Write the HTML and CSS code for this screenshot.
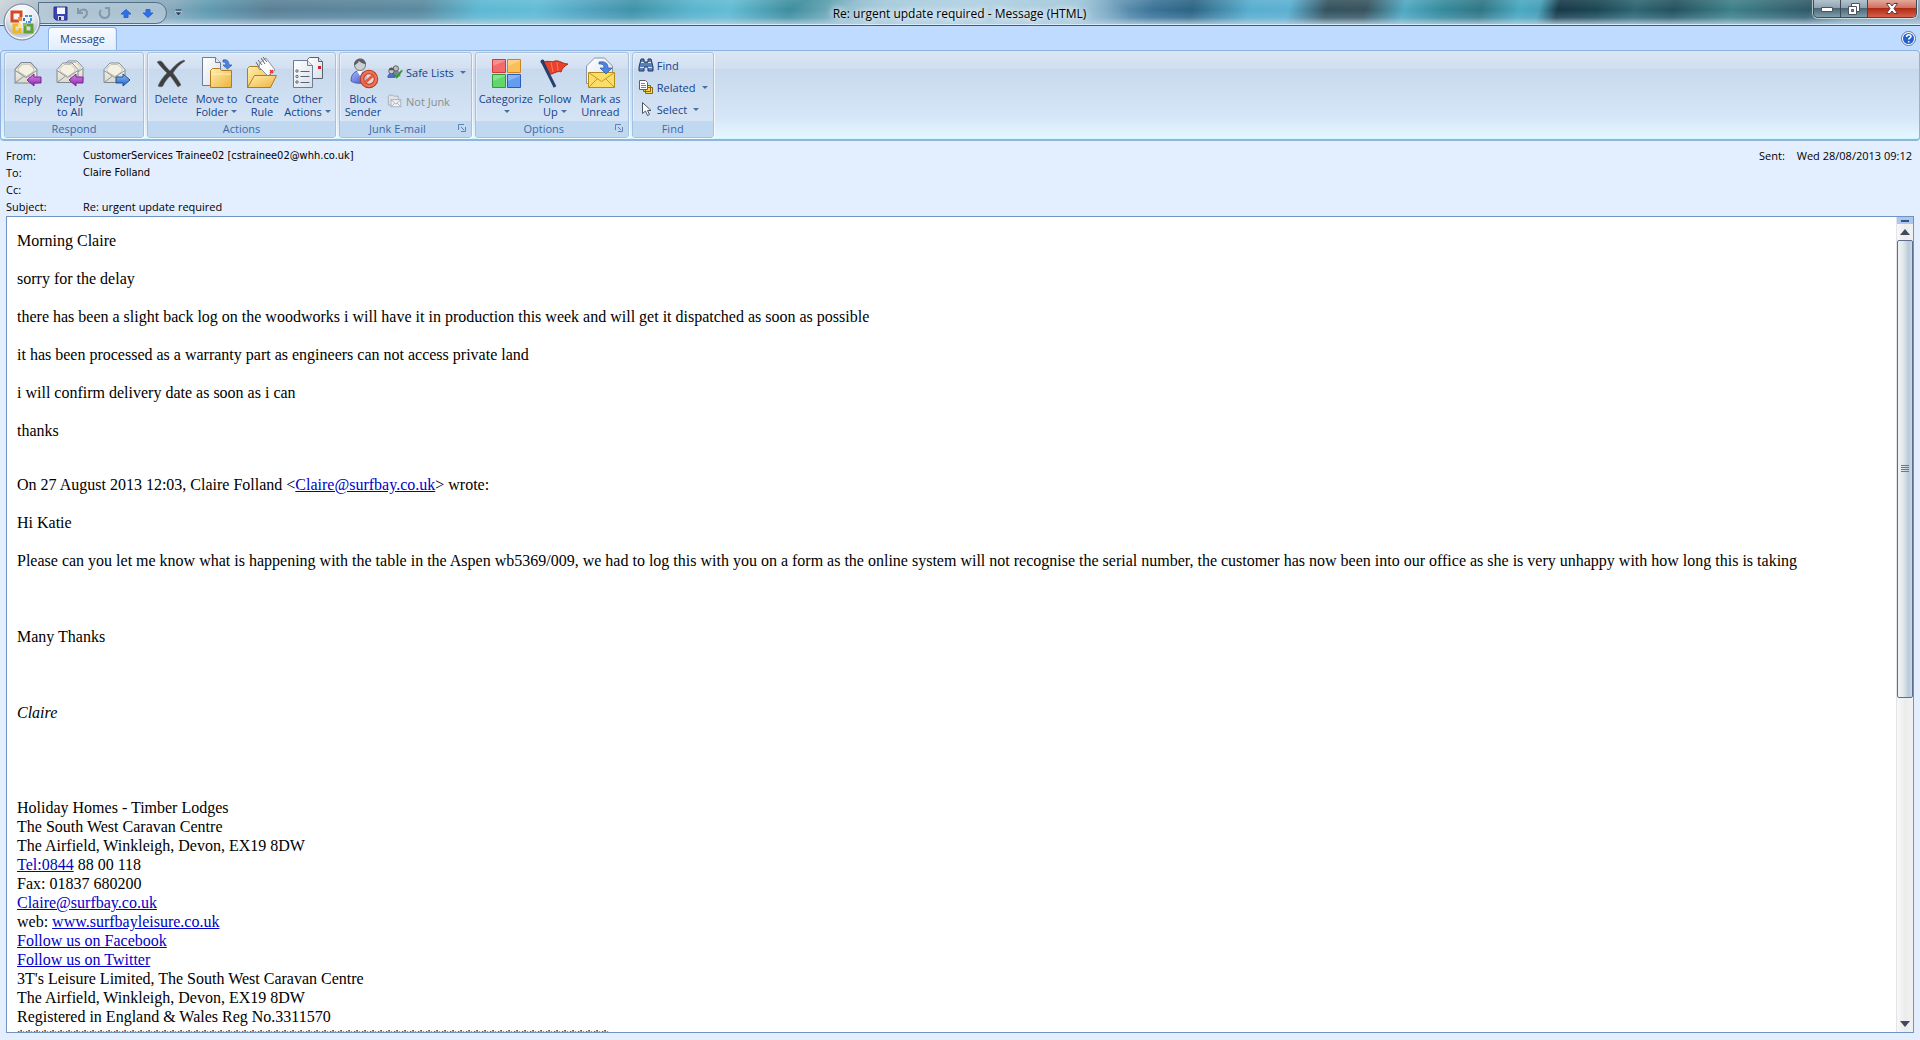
FILE: index.html
```html
<!DOCTYPE html>
<html lang="en">
<head>
<meta charset="utf-8">
<title>Re: urgent update required - Message (HTML)</title>
<link rel="stylesheet" href="styles.css">
</head>
<body>
<svg class="defs" aria-hidden="true">
  <defs>
    <linearGradient id="paper" x1="0" y1="0" x2="1" y2="1"><stop offset="0" stop-color="#fff"/><stop offset="1" stop-color="#d9dfe8"/></linearGradient>
    <linearGradient id="cream" x1="0" y1="0" x2="0" y2="1"><stop offset="0" stop-color="#fffdf2"/><stop offset="1" stop-color="#dcd9c8"/></linearGradient>
    <linearGradient id="gold" x1="0" y1="0" x2="1" y2="1"><stop offset="0" stop-color="#fff0b0"/><stop offset="1" stop-color="#eeb13c"/></linearGradient>
    <linearGradient id="purple" x1="0" y1="0" x2="0" y2="1"><stop offset="0" stop-color="#d58be6"/><stop offset="1" stop-color="#8c25ac"/></linearGradient>
    <linearGradient id="blue" x1="0" y1="0" x2="0" y2="1"><stop offset="0" stop-color="#8cc1f5"/><stop offset="1" stop-color="#1f5fc8"/></linearGradient>
    <linearGradient id="person" x1="0" y1="0" x2="1" y2="1"><stop offset="0" stop-color="#a9baf8"/><stop offset="1" stop-color="#3652cc"/></linearGradient>
    <radialGradient id="orb" cx=".5" cy=".25" r=".8"><stop offset="0" stop-color="#fff"/><stop offset=".5" stop-color="#e3e7ef"/><stop offset=".75" stop-color="#b9c3d3"/><stop offset="1" stop-color="#fff"/></radialGradient>
    <symbol id="envelope" viewBox="0 0 24 24">
      <path d="M1 9 7 2.500h9L22 9v13H1z" fill="url(#cream)" stroke="#7f8896"/>
      <path d="M4 11V8l4-4h7l4 4v3l-7 5z" fill="#f4f1e2" stroke="#c4c2b4"/>
      <path d="M1 10l10.500 7L22 10M1 22l8-6M22 22l-8-6" fill="none" stroke="#8f98a6"/>
    </symbol>
  </defs>
</svg>

<div class="window">
  <header class="titlebar">
    <div class="quick">
      <button class="qbtn" aria-label="Save"><svg width="15" height="15" viewBox="0 0 15 15"><path d="M1 1h13v13H3l-2-2z" fill="#3d44b4" stroke="#282e86"/><path d="M4 1.500h8V8H4z" fill="#f4f7ff"/><path d="M5 10h6v4H5z" fill="#d5daf0"/><path d="M6 11h2v3H6z" fill="#20246c"/></svg></button>
      <button class="qbtn" aria-label="Undo"><svg width="13" height="14" viewBox="0 0 13 14"><path d="M2 2v5h5M3 6c3-4 8-3 8 1 0 3-2 4-4 5" fill="none" stroke="#8299ad" stroke-width="2"/></svg></button>
      <button class="qbtn" aria-label="Redo"><svg width="13" height="14" viewBox="0 0 13 14"><path d="M7 2h4v4M3 4c-3 4 0 8 4 8 3 0 5-3 4-6" fill="none" stroke="#8299ad" stroke-width="2"/></svg></button>
      <button class="qbtn" aria-label="Previous item"><svg width="12" height="9" viewBox="0 0 12 9"><path d="M6 .5l5 4.500H8v3.500H4V5H1z" fill="#2a70ea" stroke="#2e66d0"/></svg></button>
      <button class="qbtn" aria-label="Next item"><svg width="12" height="9" viewBox="0 0 12 9"><path d="M6 8.500l5-4.500H8V.5H4V4H1z" fill="#2a70ea" stroke="#2e66d0"/></svg></button>
    </div>
    <button class="qmore" aria-label="Customize Quick Access Toolbar"><svg width="7" height="8" viewBox="0 0 7 8"><path d="M0 0h7v2H0zM0 3h7L3.500 7z" fill="#27415e" stroke="#e6f0f6" stroke-width=".5"/></svg></button>
    <h1 class="title">Re: urgent update required - Message (HTML)</h1>
    <div class="controls">
      <button class="ctl" aria-label="Minimize"><svg width="12" height="6" viewBox="0 0 12 6"><path d="M.5 1.500h11v4H.5z" fill="#fff" stroke="#4b5560"/></svg></button>
      <button class="ctl" aria-label="Restore"><svg width="12" height="12" viewBox="0 0 12 12"><path d="M3.500.5h8v8h-8z" fill="#fff" stroke="#4b5560"/><path d="M.5 3.500h8v8h-8z" fill="#fff" stroke="#4b5560"/><path d="M3.500 6.500h2v2h-2z" fill="#8897a4" stroke="#4b5560"/></svg></button>
      <button class="ctl close" aria-label="Close"><svg width="12" height="11" viewBox="0 0 12 11"><path d="M.5.5h3.500L6 3 8 .5h3.500L8 5.500l3.500 5H8L6 8l-2 2.500H.5l3.500-5z" fill="#fff" stroke="#5a3a40"/></svg></button>
    </div>
  </header>

  <button class="office" aria-label="Office Button"><svg width="38" height="38" viewBox="0 0 38 38">
    <circle cx="19" cy="19" r="18" fill="url(#orb)" stroke="#6f8098"/><circle cx="19" cy="19" r="16.500" fill="none" stroke="#fff" stroke-opacity=".8"/>
    <g fill="none" stroke-width="3"><path d="M16 18H9V9h9v5" stroke="#d9481c"/><path d="M22 13h6v6h-5" stroke="#4a8fd0" stroke-width="2" stroke-dasharray="3 1"/><path d="M17 22h-6v7h6v-4" stroke="#f0b71e"/><path d="M22 23v6h7v-7h-5" stroke="#62a030"/></g>
    <path d="M15 14h4v4h-4z" fill="#f58a3c"/><path d="M20 15h2v3h-2z" fill="#3a74bd"/><path d="M15 21h3v3h-3z" fill="#fce18b"/><path d="M20 20h4v3h-4z" fill="#8cc152"/>
  </svg></button>

  <nav class="tabs">
    <button class="tab">Message</button>
    <button class="help" aria-label="Help"><svg width="15" height="15" viewBox="0 0 15 15"><circle cx="7.500" cy="7.500" r="7" fill="#fff" stroke="#5577a8"/><circle cx="7.500" cy="7.500" r="5.500" fill="#2560d0"/><path d="M5.500 6c0-3 4.500-3 4.500-.5 0 1.500-2.300 1.500-2.300 3M7.700 10v1.500" fill="none" stroke="#fff" stroke-width="1.500"/></svg></button>
  </nav>

  <div class="ribbon">
    <section class="group">
      <div class="tools">
        <button class="big"><svg width="32" height="32" viewBox="0 0 32 32"><use href="#envelope" x="2" y="3" width="25" height="25"/><path d="M15 23l7-6v3h7v6h-7v3z" fill="url(#purple)" stroke="#7a2396"/></svg><span>Reply</span></button>
        <button class="big"><svg width="32" height="32" viewBox="0 0 32 32"><use href="#envelope" x="7" y="1" width="24" height="25"/><use href="#envelope" x="2" y="3" width="24" height="25"/><path d="M15 23l7-6v3h7v6h-7v3z" fill="url(#purple)" stroke="#7a2396"/></svg><span>Reply<br>to All</span></button>
        <button class="big wide"><svg width="32" height="32" viewBox="0 0 32 32"><use href="#envelope" x="3" y="3" width="24" height="25"/><path d="M30 23l-7-6v3h-7v6h7v3z" fill="url(#blue)" stroke="#1f4f9c"/></svg><span>Forward</span></button>
      </div>
      <h2>Respond</h2>
    </section>

    <section class="group">
      <div class="tools">
        <button class="big"><svg width="32" height="32" viewBox="0 0 32 32"><path d="M2 5c3-2 5-1 6 1 3 4 5 6 7 8 4-5 8-9 14-11l1 1c-5 3-9 7-12 12 3 4 6 8 8 12l-3 2c-3-4-5-8-8-11-3 3-6 7-7 10-1 1-4 1-5 0 2-5 5-9 9-13C8 12 5 9 2 5z" fill="#3f3f41" stroke="#666" stroke-width=".5"/></svg><span>Delete</span></button>
        <button class="big wide"><svg width="32" height="32" viewBox="0 0 32 32"><path d="M1.500.5h13l5 5v23h-18z" fill="url(#paper)" stroke="#6f7d92"/><path d="M14.500.5v5h5" fill="#e6ebf2" stroke="#6f7d92"/><path d="M9.500 13.500l2-2h7l2 2h10v17h-21z" fill="url(#gold)" stroke="#b07c1e"/><path d="M10 17h20" stroke="#fff0b8"/><path d="M22 3c4-1 6 1 6 5h3l-4.500 4L22 8h3c0-2-1-3-3-3z" fill="#4b86dd" stroke="#2659b0" stroke-width=".7"/></svg><span>Move to<br>Folder<i class="caret"></i></span></button>
        <button class="big"><svg width="32" height="32" viewBox="0 0 32 32"><path d="M1.500 30.500v-19l2-2h8l2 3h11v18z" fill="url(#gold)" stroke="#b07c1e"/><path d="M14 6l6-5 9 12-7 6-9-9z" fill="#fff" stroke="#8b95a5"/><path d="M12 3l4 5M15 1l4 6M10 5l3 5M17 0l4 5" stroke="#63666c"/><path d="M24 13l3 3M27 13l-3 3" stroke="#d33" stroke-width="1.500"/><path d="M1.500 30.500l7-12h22l-6 12z" fill="url(#gold)" stroke="#b07c1e"/></svg><span>Create<br>Rule</span></button>
        <button class="big wide"><svg width="32" height="32" viewBox="0 0 32 32"><path d="M15.500 2.500l2-2h9l4 4v17h-15z" fill="url(#paper)" stroke="#59616d"/><path d="M26.500.5v4h4" fill="#d8dee8" stroke="#59616d"/><path d="M26 9h3v3h-3z" fill="#c22"/><path d="M1.500 3.500h14l5 5v22h-19z" fill="url(#paper)" stroke="#6f7d92"/><path d="M15.500 3.500v5h5" fill="#e6ebf2" stroke="#6f7d92"/><g fill="none" stroke="#566577"><circle cx="5" cy="14" r="1.200"/><circle cx="5" cy="19.500" r="1.200"/><circle cx="5" cy="25" r="1.200"/><path d="M8.500 14.500h9M8.500 19.500h9M8.500 25.500h9"/></g></svg><span>Other<br>Actions<i class="caret"></i></span></button>
      </div>
      <h2>Actions</h2>
    </section>

    <section class="group">
      <div class="tools">
        <button class="big"><svg width="32" height="32" viewBox="0 0 32 32"><path d="M4 24c0-7 4-10 8-10s8 3 8 10c-4 3-12 3-16 0z" fill="url(#person)" stroke="#4a5bb0"/><path d="M10 14l3 5 3-5z" fill="#fff"/><circle cx="13" cy="8" r="5.500" fill="#cdd1d6" stroke="#777"/><path d="M7 8c0-8 11-9 12-1-3 0-6-2-7-3-1 2-3 4-5 4z" fill="#5c5f64"/><circle cx="22" cy="22" r="7" fill="#f6d4cc" fill-opacity=".7" stroke="#b93a22" stroke-width="4.500"/><circle cx="22" cy="22" r="7" fill="none" stroke="#ee7255" stroke-width="2.500"/><path d="M17 26.500L27 17.500" stroke="#e15b3e" stroke-width="3"/></svg><span>Block<br>Sender</span></button>
        <div class="stack">
          <button class="small"><svg width="16" height="16" viewBox="0 0 18 16"><path d="M6 10c0-5 9-5 9 1v2H6z" fill="#7e868e"/><circle cx="10" cy="4" r="3" fill="#b8bec4" stroke="#50565c"/><path d="M1 14c0-6 8-6 8 0z" fill="#5270da" stroke="#3a4e9c"/><circle cx="5" cy="7" r="3" fill="#c6cacf" stroke="#50565c"/><path d="M2 6c0-4 6-4 6 0z" fill="#54585e"/><path d="M8 11l3 3 6-8" fill="none" stroke="#2c9a34" stroke-width="2"/></svg>Safe Lists<i class="caret"></i></button>
          <button class="small" disabled><svg width="16" height="16" viewBox="0 0 18 16"><g fill="#dfe3ea" stroke="#a3abb7"><path d="M1.500 2.500l1-1h4l1 1h5v10h-11z"/><path d="M4.500 6.500h11v8h-11z" fill="#f0f2f6"/><path d="M4.500 6.500l5.500 5 5.500-5M4.500 14.500l4-4M15.500 14.500l-4-4" fill="none"/></g></svg>Not Junk</button>
        </div>
      </div>
      <h2 class="launchable">Junk E-mail<button class="launch" aria-label="Junk E-mail options"><svg width="8" height="8" viewBox="0 0 8 8"><path d="M.5 6V.5H6" fill="none" stroke="#5f82ae"/><path d="M3 3l3 3M7.500 3v4.500H3" fill="none" stroke="#5f82ae"/></svg></button></h2>
    </section>

    <section class="group">
      <div class="tools">
        <button class="big widest"><svg width="32" height="32" viewBox="0 0 32 32"><path d="M2.500 2.500h13v13h-13z" fill="#f4696b" stroke="#c93c3c"/><path d="M17.500 2.500h13v13h-13z" fill="#fbbf58" stroke="#c98620"/><path d="M2.500 17.500h13v13h-13z" fill="#62d66a" stroke="#2f9b3c"/><path d="M17.500 17.500h13v13h-13z" fill="#659bf0" stroke="#2a5cba"/><path d="M3 9l12-5v-1H3zM18 9l12-5v-1H18zM3 24l12-5v-1H3zM18 24l12-5v-1H18z" fill="#fff" fill-opacity=".25"/></svg><span>Categorize<br><i class="caret"></i></span></button>
        <button class="big"><svg width="32" height="32" viewBox="0 0 32 32"><path d="M5 5c4-2 8 1 11-1 4-1 8 3 13 3-3 2-6 4-7 8-4-2-8 3-12 2z" fill="#e8432a" stroke="#a52a18"/><path d="M12 5l2 10M18 5l1 9" stroke="#ff9078" stroke-opacity=".7"/><path d="M3 4l13 26" stroke="#26406e" stroke-width="3"/><circle cx="3.500" cy="4.500" r="2" fill="#26406e"/></svg><span>Follow<br>Up<i class="caret"></i></span></button>
        <button class="big wide"><svg width="32" height="32" viewBox="0 0 32 32"><path d="M2.500 26.500V9l8-8h10l8 8v17.500z" fill="url(#paper)" stroke="#8b95a5"/><path d="M4.500 15.500h26v15h-26z" fill="#fbdd68" stroke="#b58b20"/><path d="M4.500 15.500l13 9 13-9M4.500 30.500l9-9M30.500 30.500l-9-9" fill="none" stroke="#c4972a"/><path d="M15 5c6-1 9 1 9 6h4l-6 6-6-6h4c0-3-1-4-5-4z" fill="#4b86dd" stroke="#2659b0" stroke-width=".7"/></svg><span>Mark as<br>Unread</span></button>
      </div>
      <h2 class="launchable">Options<button class="launch" aria-label="Tracking options"><svg width="8" height="8" viewBox="0 0 8 8"><path d="M.5 6V.5H6" fill="none" stroke="#5f82ae"/><path d="M3 3l3 3M7.500 3v4.500H3" fill="none" stroke="#5f82ae"/></svg></button></h2>
    </section>

    <section class="group">
      <div class="tools">
        <div class="stack tight">
          <button class="small"><svg width="16" height="16" viewBox="0 0 16 16"><path d="M3 2h3v3h4V2h3l2 8v4h-5v-4H6v4H1v-4z" fill="#5b7fb4" stroke="#1f3b68"/><path d="M2 10.500h4M10 10.500h4M3 5.500h3M10 5.500h3" stroke="#dbe7f7"/></svg>Find</button>
          <button class="small"><svg width="16" height="16" viewBox="0 0 16 16"><path d="M7.500 8.500h7v6h-7zM5.500 6.500h7v6h-7z" fill="#ffd65a" stroke="#8a6410"/><path d="M1.500 1.500h6l2 2v7h-8z" fill="#fff" stroke="#59616d"/><path d="M3 4.500h4M3 6.500h5M3 8.500h5" stroke="#7b8796"/></svg>Related<i class="caret"></i></button>
          <button class="small"><svg width="16" height="16" viewBox="0 0 16 16"><path d="M4.500 1.500v11l3-2.500 2 4.500 2-1-2-4h3.500z" fill="#fff" stroke="#4a5566"/></svg>Select<i class="caret"></i></button>
        </div>
      </div>
      <h2>Find</h2>
    </section>
  </div>

  <dl class="fields">
    <dt>From:</dt><dd class="name">CustomerServices Trainee02 [cstrainee02@whh.co.uk]</dd>
    <dd class="sent"><span>Sent:</span><span>Wed 28/08/2013 09:12</span></dd>
    <dt>To:</dt><dd class="name">Claire Folland</dd>
    <dt>Cc:</dt><dd></dd>
    <dt>Subject:</dt><dd>Re: urgent update required</dd>
  </dl>

  <main class="message">
    <article class="mail">
      <p>Morning Claire</p>
      <p>sorry for the delay</p>
      <p>there has been a slight back log on the woodworks i will have it in production this week and will get it dispatched as soon as possible</p>
      <p>it has been processed as a warranty part as engineers can not access private land</p>
      <p>i will confirm delivery date as soon as i can</p>
      <p>thanks</p>
      <p class="quote">On 27 August 2013 12:03, Claire Folland &lt;<a href="mailto:Claire@surfbay.co.uk">Claire@surfbay.co.uk</a>&gt; wrote:</p>
      <p>Hi Katie</p>
      <p>Please can you let me know what is happening with the table in the Aspen wb5369/009, we had to log this with you on a form as the online system will not recognise the serial number, the customer has now been into our office as she is very unhappy with how long this is taking</p>
      <p>&nbsp;</p>
      <p>Many Thanks</p>
      <p>&nbsp;</p>
      <p><em>Claire</em></p>
      <p>&nbsp;</p>
      <p>&nbsp;<br>Holiday Homes - Timber Lodges<br>
      The South West Caravan Centre<br>
      The Airfield, Winkleigh, Devon, EX19 8DW<br>
      <a href="tel:0844">Tel:0844</a> 88 00 118<br>
      Fax: 01837 680200<br>
      <a href="mailto:Claire@surfbay.co.uk">Claire@surfbay.co.uk</a><br>
      web: <a href="http://www.surfbayleisure.co.uk">www.surfbayleisure.co.uk</a><br>
      <a href="#facebook">Follow us on Facebook</a><br>
      <a href="#twitter">Follow us on Twitter</a><br>
      3T's Leisure Limited, The South West Caravan Centre<br>
      The Airfield, Winkleigh, Devon, EX19 8DW<br>
      Registered in England &amp; Wales Reg No.3311570<br>
      **************************************************************************</p>
    </article>
    <div class="scroll">
      <div class="split"></div>
      <button class="arrow" aria-label="Scroll up"><svg width="10" height="6" viewBox="0 0 10 6"><path d="M5 0l5 6H0z" fill="#3f4a5e"/></svg></button>
      <div class="track"><div class="thumb"><i></i><i></i><i></i><i></i></div></div>
      <button class="arrow" aria-label="Scroll down"><svg width="10" height="6" viewBox="0 0 10 6"><path d="M5 6l5-6H0z" fill="#3f4a5e"/></svg></button>
    </div>
  </main>
</div>
</body>
</html>
```
FILE: styles.css
```css
* { box-sizing: border-box; }
body {
  margin: 0;
  font: 11px/13px "Open Sans", "Noto Sans", sans-serif;
  color: #000;
  background: #e3eeff;
}
h1, h2, p, dl, dd { margin: 0; font-weight: 400; }
button {
  margin: 0;
  padding: 0;
  border: 0;
  background: none;
  font: inherit;
  color: #15428b;
}
svg { display: block; flex: none; }
.defs { position: absolute; width: 0; height: 0; }

.window {
  position: relative;
  display: flex;
  flex-direction: column;
  height: 100vh;
}

/* Title bar */
.titlebar {
  display: grid;
  grid-template-columns: auto auto 1fr auto;
  align-items: start;
  height: 26px;
  padding: 0 3px 0 38px;
  border-bottom: 1px solid #3f5a75;
  box-shadow: inset 0 -1px #d9ecf8;
  background:
    linear-gradient(rgba(255,255,255,.1), rgba(190,215,235,0) 40%, rgba(175,205,228,.2) 70%, rgba(185,212,232,.9)),
    radial-gradient(170px 34px at 50% 60%, rgba(195,220,235,.9), rgba(180,210,228,.6) 70%, transparent),
    linear-gradient(105deg, #cdd4da 0, #9fb4c2 3%, #86a9bc 9%, #5f9ab0 11%, #5a8096 14%, #5a8aa0 22%, #5cb8d3 25%, #62bcd6 28%, #4ea0bd 31%, #3e93a8 33%, #58b4ce 36%, #62bcd4 38%, #3e8fa0 41%, #3b8b99 43%, #7bb0c4 46%, #8fbdd2 56%, #3a7298 60%, #2c6484 62%, #57aed0 65%, #5cb0d2 67%, #33525d 69%, #38535e 71%, #4fa9c2 73%, #358a9c 75%, #2f7584 77%, #49a9c2 79%, #46a0b8 80%, #173847 81%, #1a4754 83%, #2d6672 85%, #23525e 87%, #3d8088 90%, #2f5967 94%, #7397a8 96%, #8fa9ba 100%);
}
.quick {
  display: flex;
  align-items: center;
  gap: 4px;
  height: 22px;
  margin-top: 2px;
  padding: 0 9px 0 12px;
  border: 1px solid #52708a;
  border-radius: 0 11px 11px 0;
  background: rgba(190,208,222,.6);
}
.qbtn { display: grid; place-items: center; width: 18px; height: 18px; }
.qmore { padding: 9px 8px; }
.title {
  align-self: center;
  justify-self: center;
  padding: 1px 84px 0 0;
  font-size: 12px;
  line-height: 16px;
  text-shadow: 0 0 6px #fff, 0 0 8px #fff;
}
.controls {
  display: flex;
  height: 18px;
  border: 1px solid #3c4a58;
  border-top: 0;
  border-radius: 0 0 5px 5px;
  overflow: hidden;
  box-shadow: 0 0 0 1px rgba(255,255,255,.6);
}
.ctl {
  display: grid;
  place-items: center;
  width: 27px;
  border-right: 1px solid #3c4a58;
  background: linear-gradient(#b4c4ce, #8ea3b0 45%, #4d6674 50%, #7f9eae);
}
.ctl.close {
  width: 48px;
  border: 0;
  background: linear-gradient(#e3a99c, #cf7262 45%, #b32a12 50%, #d4614a);
}
.office { position: absolute; left: 3px; top: 3px; z-index: 1; }

/* Tabs */
.tabs {
  display: flex;
  justify-content: space-between;
  align-items: flex-end;
  height: 24px;
  padding: 0 4px 0 48px;
  background: #bfdbff;
}
.tab {
  width: 69px;
  height: 23px;
  padding-bottom: 2px;
  border: 1px solid #8db2e3;
  border-bottom: 0;
  border-radius: 4px 4px 0 0;
  background: linear-gradient(#f8fbff, #e2edfb);
  box-shadow: inset 1px 1px #fff, inset -1px 0 #c5f3fb;
}
.help { align-self: center; }

/* Ribbon */
.ribbon {
  display: flex;
  gap: 3px;
  height: 91px;
  padding: 1px 2px 1px 3px;
  border: 1px solid #8db2e3;
  border-bottom: 2px solid #90b4da;
  border-radius: 4px;
  background: linear-gradient(#dbe6f4, #d0def0 20%, #c9d9ed 21%, #d6e6f8 75%, #e6f8ff);
  box-shadow: inset 0 -1px #c9f6ff;
}
.group {
  display: flex;
  flex-direction: column;
  border: 1px solid #a5c1e0;
  border-radius: 3px;
  background: linear-gradient(#dde8f5, #d3e0f1 18%, #c8d9ed 19%, #d9e8f8);
  box-shadow: 1px 1px rgba(255,255,255,.7), inset 1px 1px rgba(255,255,255,.4);
}
.tools {
  display: flex;
  flex: 1;
  padding: 4px 3px 0 2px;
}
.group h2 {
  position: relative;
  height: 16px;
  font-size: 11px;
  line-height: 16px;
  text-align: center;
  color: #3e6aaa;
  background: #c1d8f1;
}
.group .launchable { padding-right: 16px; }
.launch { position: absolute; right: 5px; top: 3px; }
.big {
  display: flex;
  flex-direction: column;
  align-items: center;
  gap: 3px;
  width: 42px;
  white-space: nowrap;
}
.big.wide { width: 49px; }
.big.widest { width: 56px; }
.caret {
  display: inline-block;
  margin-left: 3px;
  vertical-align: 3px;
  border: solid transparent;
  border-width: 3px 3px 0;
  border-top-color: #4d6f9f;
}
.stack {
  display: flex;
  flex-direction: column;
  gap: 13px;
  padding: 7px 2px 0 3px;
}
.stack.tight { gap: 6px; padding: 0 2px 0 3px; }
.small {
  display: flex;
  align-items: center;
  gap: 3px;
  height: 16px;
  white-space: nowrap;
}
.small:disabled { color: #8d8d8d; }

/* Message header fields */
.fields {
  display: grid;
  grid-template-columns: 77px 1fr auto;
  grid-auto-rows: 17px;
  padding: 6px 8px 0 6px;
  line-height: 17px;
}
.fields dt { grid-column: 1; }
.name { font-family: "DejaVu Sans Condensed", "DejaVu Sans", sans-serif; }
.sent { display: flex; gap: 12px; }

/* Message body */
.message {
  display: flex;
  flex: 1;
  min-height: 0;
  margin: 1px 6px 7px;
  border: 1px solid #6f94c4;
  background: #fff;
}
.mail {
  flex: 1;
  min-width: 0;
  overflow: hidden;
  padding: 14px 10px 0;
  font: 16px/19px "Liberation Serif", "Times New Roman", serif;
}
.mail p { margin-bottom: 19px; }
.mail .quote { margin-top: 35px; }
.mail a { color: #0000c8; }
.scroll {
  display: flex;
  flex-direction: column;
  width: 17px;
  border-left: 1px solid #e4e4e8;
  background: linear-gradient(90deg, #f8f8f8, #ececec 50%, #f2f2f2);
}
.split { height: 7px; border: solid #a9c7f2; border-width: 3px 4px 2px; background: #3d5270; }
.arrow { display: grid; place-items: center; height: 16px; }
.track { display: flex; flex: 1; flex-direction: column; }
.thumb {
  display: flex;
  flex-direction: column;
  align-items: center;
  justify-content: center;
  gap: 1px;
  height: 59%;
  border: 1px solid #5f6c92;
  border-radius: 2px;
  background: linear-gradient(90deg, #f0f4f6, #dfe6ea 40%, #b8cad8 75%, #cdd9e8);
}
.thumb i { width: 8px; height: 1px; background: #6e7688; }
```
